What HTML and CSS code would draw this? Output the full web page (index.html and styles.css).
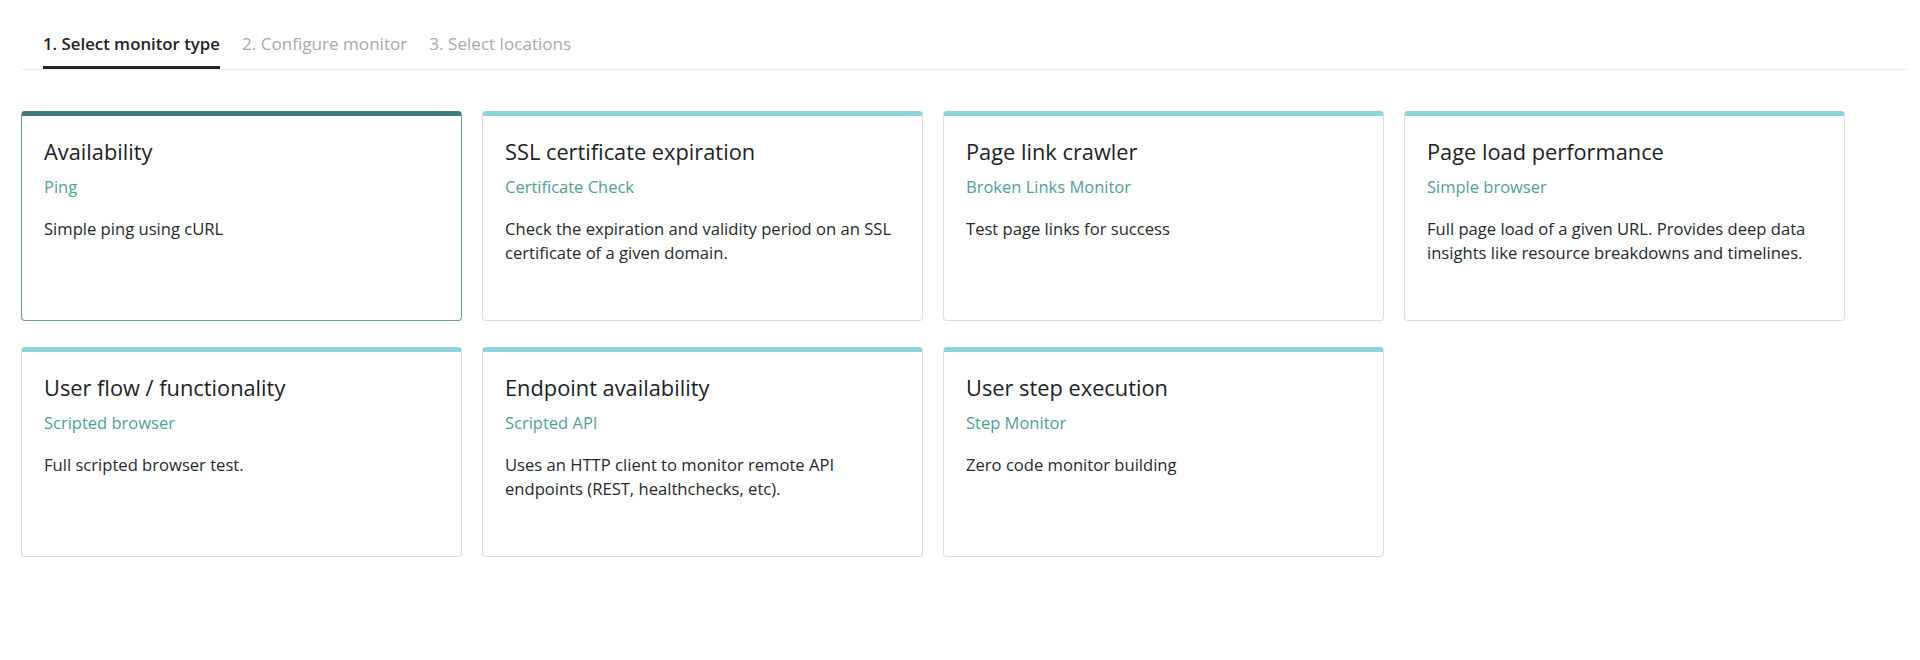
FILE: index.html
```html
<!DOCTYPE html>
<html lang="en">
<head>
<meta charset="utf-8">
<title>Select monitor type</title>
<link rel="stylesheet" href="styles.css">
</head>
<body>
<div class="page">
  <nav class="steps">
    <div class="step active">1. Select monitor type</div>
    <div class="step">2. Configure monitor</div>
    <div class="step">3. Select locations</div>
  </nav>
  <div class="grid">
    <div class="card selected">
      <h3 class="card-title">Availability</h3>
      <div class="card-type">Ping</div>
      <p class="card-desc">Simple ping using cURL</p>
    </div>
    <div class="card">
      <h3 class="card-title">SSL certificate expiration</h3>
      <div class="card-type">Certificate Check</div>
      <p class="card-desc">Check the expiration and validity period on an SSL certificate of a given domain.</p>
    </div>
    <div class="card">
      <h3 class="card-title">Page link crawler</h3>
      <div class="card-type">Broken Links Monitor</div>
      <p class="card-desc">Test page links for success</p>
    </div>
    <div class="card">
      <h3 class="card-title">Page load performance</h3>
      <div class="card-type">Simple browser</div>
      <p class="card-desc">Full page load of a given URL. Provides deep data insights like resource breakdowns and timelines.</p>
    </div>
    <div class="card">
      <h3 class="card-title">User flow / functionality</h3>
      <div class="card-type">Scripted browser</div>
      <p class="card-desc">Full scripted browser test.</p>
    </div>
    <div class="card">
      <h3 class="card-title">Endpoint availability</h3>
      <div class="card-type">Scripted API</div>
      <p class="card-desc">Uses an HTTP client to monitor remote API endpoints (REST, healthchecks, etc).</p>
    </div>
    <div class="card">
      <h3 class="card-title">User step execution</h3>
      <div class="card-type">Step Monitor</div>
      <p class="card-desc">Zero code monitor building</p>
    </div>
  </div>
</div>
</body>
</html>
```
FILE: styles.css
```css
html, body {
  margin: 0;
  padding: 0;
  background: #ffffff;
}

body {
  font-family: "Open Sans", "Noto Sans", sans-serif;
  color: #232a2f;
}

.page {
  padding: 22px 12px 0 21px;
}

.steps {
  display: flex;
  gap: 22px;
  padding-left: 22px;
  border-bottom: 1px solid #ececec;
}

.step {
  font-size: 17.1px;
  line-height: 24px;
  padding: 10px 0;
  border-bottom: 3px solid transparent;
  color: #a9a9a9;
  font-weight: 400;
}

.step.active {
  font-size: 16.8px;
  color: #1f2326;
  font-weight: 600;
  border-bottom-color: #1f2326;
}

.grid {
  margin-top: 41px;
  display: grid;
  grid-template-columns: repeat(4, 441px);
  grid-auto-rows: 210px;
  column-gap: 20px;
  row-gap: 26px;
}

.card {
  box-sizing: border-box;
  border: 1px solid #dcdcdc;
  border-top: 5px solid #8ed5db;
  border-radius: 4px;
  padding: 22px 22px 0 22px;
  background: #fff;
}

.card.selected {
  border-color: #6e9a9c;
  border-top-color: #3e7b79;
}

.card-title {
  margin: 0;
  font-size: 21.8px;
  line-height: 28px;
  font-weight: 400;
  color: #1d2227;
}

.card-type {
  margin-top: 9px;
  font-size: 16.5px;
  line-height: 24px;
  color: #4f9f9a;
}

.card-desc {
  margin: 18px 0 0;
  font-size: 16.6px;
  line-height: 24px;
  color: #26292c;
  max-width: 400px;
}
```
